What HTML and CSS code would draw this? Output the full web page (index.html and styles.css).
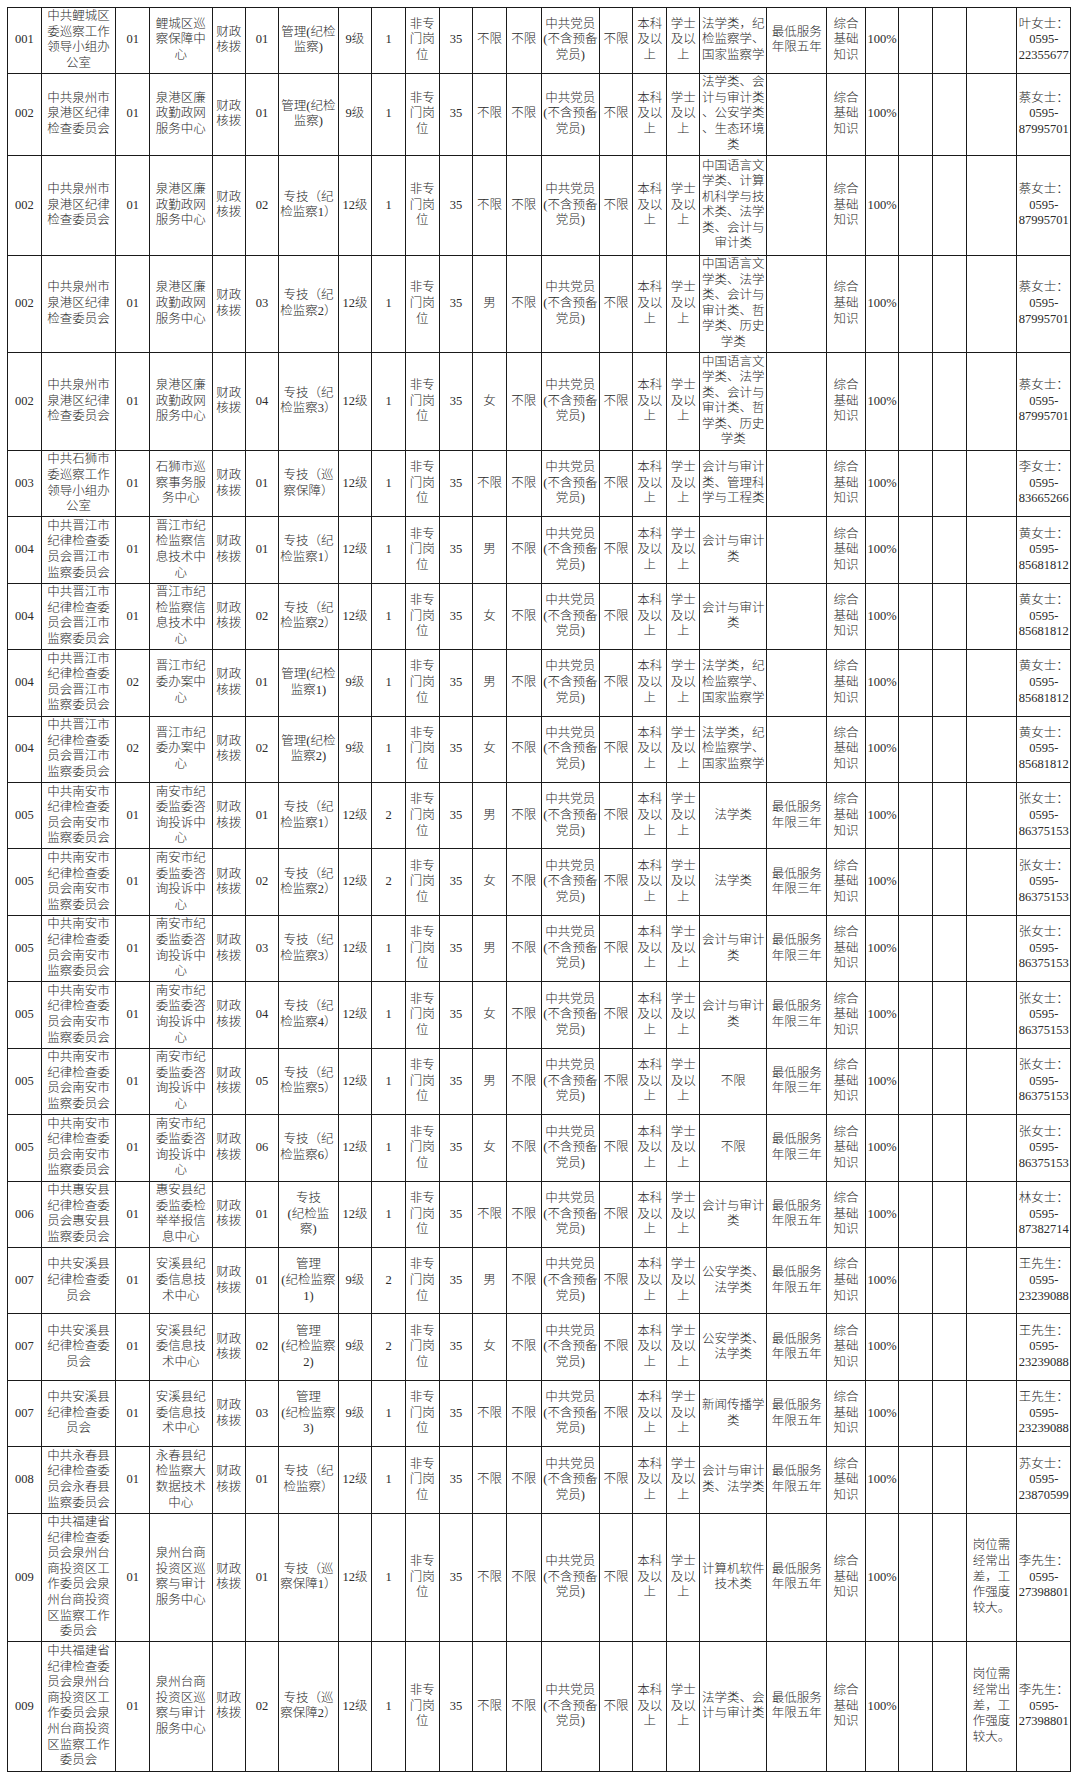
FILE: index.html
```html
<!DOCTYPE html>
<html lang="zh-CN">
<head>
<meta charset="utf-8">
<title>职位表</title>
<link rel="stylesheet" href="styles.css">
</head>
<body>
<div class="sheet">
<table class="grid">
<colgroup>
<col class="c-code"><col class="c-unit"><col class="c-n"><col class="c-sub"><col class="c-n2"><col class="c-n3"><col class="c-pos"><col class="c-n"><col class="c-n"><col class="c-n4"><col class="c-n"><col class="c-n"><col class="c-n5"><col class="c-party"><col class="c-n3"><col class="c-n4"><col class="c-n2"><col class="c-major"><col class="c-svc"><col class="c-exam"><col class="c-n"><col class="c-n"><col class="c-n4"><col class="c-note"><col class="c-contact">
</colgroup>
<tbody>
<tr class="h65"><td>001</td><td>中共鲤城区<br>委巡察工作<br>领导小组办<br>公室</td><td>01</td><td>鲤城区巡<br>察保障中<br>心</td><td>财政<br>核拨</td><td>01</td><td>管理(纪检<br>监察)</td><td>9级</td><td>1</td><td>非专<br>门岗<br>位</td><td>35</td><td>不限</td><td>不限</td><td>中共党员<br>(不含预备<br>党员)</td><td>不限</td><td>本科<br>及以<br>上</td><td>学士<br>及以<br>上</td><td>法学类，纪<br>检监察学、<br>国家监察学</td><td>最低服务<br>年限五年</td><td>综合<br>基础<br>知识</td><td>100%</td><td></td><td></td><td></td><td>叶女士：<br>0595-<br>22355677</td></tr>
<tr class="h82"><td>002</td><td>中共泉州市<br>泉港区纪律<br>检查委员会</td><td>01</td><td>泉港区廉<br>政勤政网<br>服务中心</td><td>财政<br>核拨</td><td>01</td><td>管理(纪检<br>监察)</td><td>9级</td><td>1</td><td>非专<br>门岗<br>位</td><td>35</td><td>不限</td><td>不限</td><td>中共党员<br>(不含预备<br>党员)</td><td>不限</td><td>本科<br>及以<br>上</td><td>学士<br>及以<br>上</td><td>法学类、会<br>计与审计类<br>、公安学类<br>、生态环境<br>类</td><td></td><td>综合<br>基础<br>知识</td><td>100%</td><td></td><td></td><td></td><td>蔡女士：<br>0595-<br>87995701</td></tr>
<tr class="h100"><td>002</td><td>中共泉州市<br>泉港区纪律<br>检查委员会</td><td>01</td><td>泉港区廉<br>政勤政网<br>服务中心</td><td>财政<br>核拨</td><td>02</td><td>专技（纪<br>检监察1）</td><td>12级</td><td>1</td><td>非专<br>门岗<br>位</td><td>35</td><td>不限</td><td>不限</td><td>中共党员<br>(不含预备<br>党员)</td><td>不限</td><td>本科<br>及以<br>上</td><td>学士<br>及以<br>上</td><td>中国语言文<br>学类、计算<br>机科学与技<br>术类、法学<br>类、会计与<br>审计类</td><td></td><td>综合<br>基础<br>知识</td><td>100%</td><td></td><td></td><td></td><td>蔡女士：<br>0595-<br>87995701</td></tr>
<tr class="h97"><td>002</td><td>中共泉州市<br>泉港区纪律<br>检查委员会</td><td>01</td><td>泉港区廉<br>政勤政网<br>服务中心</td><td>财政<br>核拨</td><td>03</td><td>专技（纪<br>检监察2）</td><td>12级</td><td>1</td><td>非专<br>门岗<br>位</td><td>35</td><td>男</td><td>不限</td><td>中共党员<br>(不含预备<br>党员)</td><td>不限</td><td>本科<br>及以<br>上</td><td>学士<br>及以<br>上</td><td>中国语言文<br>学类、法学<br>类、会计与<br>审计类、哲<br>学类、历史<br>学类</td><td></td><td>综合<br>基础<br>知识</td><td>100%</td><td></td><td></td><td></td><td>蔡女士：<br>0595-<br>87995701</td></tr>
<tr class="h98"><td>002</td><td>中共泉州市<br>泉港区纪律<br>检查委员会</td><td>01</td><td>泉港区廉<br>政勤政网<br>服务中心</td><td>财政<br>核拨</td><td>04</td><td>专技（纪<br>检监察3）</td><td>12级</td><td>1</td><td>非专<br>门岗<br>位</td><td>35</td><td>女</td><td>不限</td><td>中共党员<br>(不含预备<br>党员)</td><td>不限</td><td>本科<br>及以<br>上</td><td>学士<br>及以<br>上</td><td>中国语言文<br>学类、法学<br>类、会计与<br>审计类、哲<br>学类、历史<br>学类</td><td></td><td>综合<br>基础<br>知识</td><td>100%</td><td></td><td></td><td></td><td>蔡女士：<br>0595-<br>87995701</td></tr>
<tr class="h66"><td>003</td><td>中共石狮市<br>委巡察工作<br>领导小组办<br>公室</td><td>01</td><td>石狮市巡<br>察事务服<br>务中心</td><td>财政<br>核拨</td><td>01</td><td>专技（巡<br>察保障）</td><td>12级</td><td>1</td><td>非专<br>门岗<br>位</td><td>35</td><td>不限</td><td>不限</td><td>中共党员<br>(不含预备<br>党员)</td><td>不限</td><td>本科<br>及以<br>上</td><td>学士<br>及以<br>上</td><td>会计与审计<br>类、管理科<br>学与工程类</td><td></td><td>综合<br>基础<br>知识</td><td>100%</td><td></td><td></td><td></td><td>李女士：<br>0595-<br>83665266</td></tr>
<tr class="h66"><td>004</td><td>中共晋江市<br>纪律检查委<br>员会晋江市<br>监察委员会</td><td>01</td><td>晋江市纪<br>检监察信<br>息技术中<br>心</td><td>财政<br>核拨</td><td>01</td><td>专技（纪<br>检监察1）</td><td>12级</td><td>1</td><td>非专<br>门岗<br>位</td><td>35</td><td>男</td><td>不限</td><td>中共党员<br>(不含预备<br>党员)</td><td>不限</td><td>本科<br>及以<br>上</td><td>学士<br>及以<br>上</td><td>会计与审计<br>类</td><td></td><td>综合<br>基础<br>知识</td><td>100%</td><td></td><td></td><td></td><td>黄女士：<br>0595-<br>85681812</td></tr>
<tr class="h66"><td>004</td><td>中共晋江市<br>纪律检查委<br>员会晋江市<br>监察委员会</td><td>01</td><td>晋江市纪<br>检监察信<br>息技术中<br>心</td><td>财政<br>核拨</td><td>02</td><td>专技（纪<br>检监察2）</td><td>12级</td><td>1</td><td>非专<br>门岗<br>位</td><td>35</td><td>女</td><td>不限</td><td>中共党员<br>(不含预备<br>党员)</td><td>不限</td><td>本科<br>及以<br>上</td><td>学士<br>及以<br>上</td><td>会计与审计<br>类</td><td></td><td>综合<br>基础<br>知识</td><td>100%</td><td></td><td></td><td></td><td>黄女士：<br>0595-<br>85681812</td></tr>
<tr class="h66"><td>004</td><td>中共晋江市<br>纪律检查委<br>员会晋江市<br>监察委员会</td><td>02</td><td>晋江市纪<br>委办案中<br>心</td><td>财政<br>核拨</td><td>01</td><td>管理(纪检<br>监察1)</td><td>9级</td><td>1</td><td>非专<br>门岗<br>位</td><td>35</td><td>男</td><td>不限</td><td>中共党员<br>(不含预备<br>党员)</td><td>不限</td><td>本科<br>及以<br>上</td><td>学士<br>及以<br>上</td><td>法学类，纪<br>检监察学、<br>国家监察学</td><td></td><td>综合<br>基础<br>知识</td><td>100%</td><td></td><td></td><td></td><td>黄女士：<br>0595-<br>85681812</td></tr>
<tr class="h66"><td>004</td><td>中共晋江市<br>纪律检查委<br>员会晋江市<br>监察委员会</td><td>02</td><td>晋江市纪<br>委办案中<br>心</td><td>财政<br>核拨</td><td>02</td><td>管理(纪检<br>监察2)</td><td>9级</td><td>1</td><td>非专<br>门岗<br>位</td><td>35</td><td>女</td><td>不限</td><td>中共党员<br>(不含预备<br>党员)</td><td>不限</td><td>本科<br>及以<br>上</td><td>学士<br>及以<br>上</td><td>法学类，纪<br>检监察学、<br>国家监察学</td><td></td><td>综合<br>基础<br>知识</td><td>100%</td><td></td><td></td><td></td><td>黄女士：<br>0595-<br>85681812</td></tr>
<tr class="h66"><td>005</td><td>中共南安市<br>纪律检查委<br>员会南安市<br>监察委员会</td><td>01</td><td>南安市纪<br>委监委咨<br>询投诉中<br>心</td><td>财政<br>核拨</td><td>01</td><td>专技（纪<br>检监察1）</td><td>12级</td><td>2</td><td>非专<br>门岗<br>位</td><td>35</td><td>男</td><td>不限</td><td>中共党员<br>(不含预备<br>党员)</td><td>不限</td><td>本科<br>及以<br>上</td><td>学士<br>及以<br>上</td><td>法学类</td><td>最低服务<br>年限三年</td><td>综合<br>基础<br>知识</td><td>100%</td><td></td><td></td><td></td><td>张女士：<br>0595-<br>86375153</td></tr>
<tr class="h66"><td>005</td><td>中共南安市<br>纪律检查委<br>员会南安市<br>监察委员会</td><td>01</td><td>南安市纪<br>委监委咨<br>询投诉中<br>心</td><td>财政<br>核拨</td><td>02</td><td>专技（纪<br>检监察2）</td><td>12级</td><td>2</td><td>非专<br>门岗<br>位</td><td>35</td><td>女</td><td>不限</td><td>中共党员<br>(不含预备<br>党员)</td><td>不限</td><td>本科<br>及以<br>上</td><td>学士<br>及以<br>上</td><td>法学类</td><td>最低服务<br>年限三年</td><td>综合<br>基础<br>知识</td><td>100%</td><td></td><td></td><td></td><td>张女士：<br>0595-<br>86375153</td></tr>
<tr class="h66"><td>005</td><td>中共南安市<br>纪律检查委<br>员会南安市<br>监察委员会</td><td>01</td><td>南安市纪<br>委监委咨<br>询投诉中<br>心</td><td>财政<br>核拨</td><td>03</td><td>专技（纪<br>检监察3）</td><td>12级</td><td>1</td><td>非专<br>门岗<br>位</td><td>35</td><td>男</td><td>不限</td><td>中共党员<br>(不含预备<br>党员)</td><td>不限</td><td>本科<br>及以<br>上</td><td>学士<br>及以<br>上</td><td>会计与审计<br>类</td><td>最低服务<br>年限三年</td><td>综合<br>基础<br>知识</td><td>100%</td><td></td><td></td><td></td><td>张女士：<br>0595-<br>86375153</td></tr>
<tr class="h66"><td>005</td><td>中共南安市<br>纪律检查委<br>员会南安市<br>监察委员会</td><td>01</td><td>南安市纪<br>委监委咨<br>询投诉中<br>心</td><td>财政<br>核拨</td><td>04</td><td>专技（纪<br>检监察4）</td><td>12级</td><td>1</td><td>非专<br>门岗<br>位</td><td>35</td><td>女</td><td>不限</td><td>中共党员<br>(不含预备<br>党员)</td><td>不限</td><td>本科<br>及以<br>上</td><td>学士<br>及以<br>上</td><td>会计与审计<br>类</td><td>最低服务<br>年限三年</td><td>综合<br>基础<br>知识</td><td>100%</td><td></td><td></td><td></td><td>张女士：<br>0595-<br>86375153</td></tr>
<tr class="h66"><td>005</td><td>中共南安市<br>纪律检查委<br>员会南安市<br>监察委员会</td><td>01</td><td>南安市纪<br>委监委咨<br>询投诉中<br>心</td><td>财政<br>核拨</td><td>05</td><td>专技（纪<br>检监察5）</td><td>12级</td><td>1</td><td>非专<br>门岗<br>位</td><td>35</td><td>男</td><td>不限</td><td>中共党员<br>(不含预备<br>党员)</td><td>不限</td><td>本科<br>及以<br>上</td><td>学士<br>及以<br>上</td><td>不限</td><td>最低服务<br>年限三年</td><td>综合<br>基础<br>知识</td><td>100%</td><td></td><td></td><td></td><td>张女士：<br>0595-<br>86375153</td></tr>
<tr class="h66"><td>005</td><td>中共南安市<br>纪律检查委<br>员会南安市<br>监察委员会</td><td>01</td><td>南安市纪<br>委监委咨<br>询投诉中<br>心</td><td>财政<br>核拨</td><td>06</td><td>专技（纪<br>检监察6）</td><td>12级</td><td>1</td><td>非专<br>门岗<br>位</td><td>35</td><td>女</td><td>不限</td><td>中共党员<br>(不含预备<br>党员)</td><td>不限</td><td>本科<br>及以<br>上</td><td>学士<br>及以<br>上</td><td>不限</td><td>最低服务<br>年限三年</td><td>综合<br>基础<br>知识</td><td>100%</td><td></td><td></td><td></td><td>张女士：<br>0595-<br>86375153</td></tr>
<tr class="h66"><td>006</td><td>中共惠安县<br>纪律检查委<br>员会惠安县<br>监察委员会</td><td>01</td><td>惠安县纪<br>委监委检<br>举举报信<br>息中心</td><td>财政<br>核拨</td><td>01</td><td>专技<br>(纪检监<br>察)</td><td>12级</td><td>1</td><td>非专<br>门岗<br>位</td><td>35</td><td>不限</td><td>不限</td><td>中共党员<br>(不含预备<br>党员)</td><td>不限</td><td>本科<br>及以<br>上</td><td>学士<br>及以<br>上</td><td>会计与审计<br>类</td><td>最低服务<br>年限五年</td><td>综合<br>基础<br>知识</td><td>100%</td><td></td><td></td><td></td><td>林女士：<br>0595-<br>87382714</td></tr>
<tr class="h66"><td>007</td><td>中共安溪县<br>纪律检查委<br>员会</td><td>01</td><td>安溪县纪<br>委信息技<br>术中心</td><td>财政<br>核拨</td><td>01</td><td>管理<br>(纪检监察<br>1)</td><td>9级</td><td>2</td><td>非专<br>门岗<br>位</td><td>35</td><td>男</td><td>不限</td><td>中共党员<br>(不含预备<br>党员)</td><td>不限</td><td>本科<br>及以<br>上</td><td>学士<br>及以<br>上</td><td>公安学类、<br>法学类</td><td>最低服务<br>年限五年</td><td>综合<br>基础<br>知识</td><td>100%</td><td></td><td></td><td></td><td>王先生：<br>0595-<br>23239088</td></tr>
<tr class="h66"><td>007</td><td>中共安溪县<br>纪律检查委<br>员会</td><td>01</td><td>安溪县纪<br>委信息技<br>术中心</td><td>财政<br>核拨</td><td>02</td><td>管理<br>(纪检监察<br>2)</td><td>9级</td><td>2</td><td>非专<br>门岗<br>位</td><td>35</td><td>女</td><td>不限</td><td>中共党员<br>(不含预备<br>党员)</td><td>不限</td><td>本科<br>及以<br>上</td><td>学士<br>及以<br>上</td><td>公安学类、<br>法学类</td><td>最低服务<br>年限五年</td><td>综合<br>基础<br>知识</td><td>100%</td><td></td><td></td><td></td><td>王先生：<br>0595-<br>23239088</td></tr>
<tr class="h66"><td>007</td><td>中共安溪县<br>纪律检查委<br>员会</td><td>01</td><td>安溪县纪<br>委信息技<br>术中心</td><td>财政<br>核拨</td><td>03</td><td>管理<br>(纪检监察<br>3)</td><td>9级</td><td>1</td><td>非专<br>门岗<br>位</td><td>35</td><td>不限</td><td>不限</td><td>中共党员<br>(不含预备<br>党员)</td><td>不限</td><td>本科<br>及以<br>上</td><td>学士<br>及以<br>上</td><td>新闻传播学<br>类</td><td>最低服务<br>年限五年</td><td>综合<br>基础<br>知识</td><td>100%</td><td></td><td></td><td></td><td>王先生：<br>0595-<br>23239088</td></tr>
<tr class="h66"><td>008</td><td>中共永春县<br>纪律检查委<br>员会永春县<br>监察委员会</td><td>01</td><td>永春县纪<br>检监察大<br>数据技术<br>中心</td><td>财政<br>核拨</td><td>01</td><td>专技（纪<br>检监察）</td><td>12级</td><td>1</td><td>非专<br>门岗<br>位</td><td>35</td><td>不限</td><td>不限</td><td>中共党员<br>(不含预备<br>党员)</td><td>不限</td><td>本科<br>及以<br>上</td><td>学士<br>及以<br>上</td><td>会计与审计<br>类、法学类</td><td>最低服务<br>年限五年</td><td>综合<br>基础<br>知识</td><td>100%</td><td></td><td></td><td></td><td>苏女士：<br>0595-<br>23870599</td></tr>
<tr class="h128"><td>009</td><td>中共福建省<br>纪律检查委<br>员会泉州台<br>商投资区工<br>作委员会泉<br>州台商投资<br>区监察工作<br>委员会</td><td>01</td><td>泉州台商<br>投资区巡<br>察与审计<br>服务中心</td><td>财政<br>核拨</td><td>01</td><td>专技（巡<br>察保障1）</td><td>12级</td><td>1</td><td>非专<br>门岗<br>位</td><td>35</td><td>不限</td><td>不限</td><td>中共党员<br>(不含预备<br>党员)</td><td>不限</td><td>本科<br>及以<br>上</td><td>学士<br>及以<br>上</td><td>计算机软件<br>技术类</td><td>最低服务<br>年限五年</td><td>综合<br>基础<br>知识</td><td>100%</td><td></td><td></td><td>岗位需<br>经常出<br>差，工<br>作强度<br>较大。</td><td>李先生：<br>0595-<br>27398801</td></tr>
<tr class="h130"><td>009</td><td>中共福建省<br>纪律检查委<br>员会泉州台<br>商投资区工<br>作委员会泉<br>州台商投资<br>区监察工作<br>委员会</td><td>01</td><td>泉州台商<br>投资区巡<br>察与审计<br>服务中心</td><td>财政<br>核拨</td><td>02</td><td>专技（巡<br>察保障2）</td><td>12级</td><td>1</td><td>非专<br>门岗<br>位</td><td>35</td><td>不限</td><td>不限</td><td>中共党员<br>(不含预备<br>党员)</td><td>不限</td><td>本科<br>及以<br>上</td><td>学士<br>及以<br>上</td><td>法学类、会<br>计与审计类</td><td>最低服务<br>年限五年</td><td>综合<br>基础<br>知识</td><td>100%</td><td></td><td></td><td>岗位需<br>经常出<br>差，工<br>作强度<br>较大。</td><td>李先生：<br>0595-<br>27398801</td></tr>
</tbody>
</table>
</div>
</body>
</html>
```
FILE: styles.css
```css
html, body {
  margin: 0;
  padding: 0;
  background: #ffffff;
}

.sheet {
  padding: 7px 0 0 7px;
}

.grid {
  border-collapse: collapse;
  table-layout: fixed;
  width: 1064px;
  font-family: "Liberation Serif", "Noto Sans CJK SC", serif;
  font-size: 12.5px;
  font-weight: 300;
  line-height: 15.6px;
  color: #2a2a2a;
}

.grid td {
  border: 1px solid #1a1a1a;
  padding: 0 1px;
  text-align: center;
  vertical-align: middle;
  overflow: hidden;
  white-space: nowrap;
}

.c-code { width: 33.6px; }
.c-unit { width: 74.8px; }
.c-n { width: 33.6px; }
.c-n2 { width: 33.2px; }
.c-n3 { width: 33.4px; }
.c-n4 { width: 33.8px; }
.c-n5 { width: 35px; }
.c-sub { width: 62.6px; }
.c-pos { width: 59.5px; }
.c-party { width: 58.1px; }
.c-major { width: 67px; }
.c-svc { width: 59.8px; }
.c-exam { width: 38.6px; }
.c-note { width: 50.7px; }
.c-contact { width: 54px; }

.h65 { height: 65.5px; }
.h66 { height: 66.45px; }
.h82 { height: 82.3px; }
.h97 { height: 97px; }
.h98 { height: 98px; }
.h100 { height: 100px; }
.h128 { height: 128.3px; }
.h130 { height: 129.7px; }
```
